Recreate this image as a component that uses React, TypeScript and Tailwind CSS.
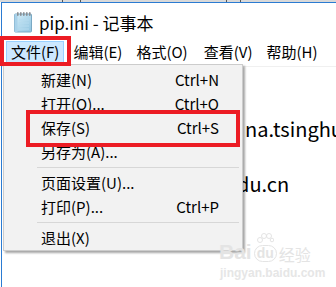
import React from "react";

const font = "font-['Noto_Sans_CJK_SC','Noto_Sans',sans-serif]";

function NotepadIcon() {
  return (
    <svg width="20" height="22" viewBox="0 0 20 22">
      <defs>
        <linearGradient id="np" x1="0" y1="0" x2="1" y2="1">
          <stop offset="0" stopColor="#d6eef9" />
          <stop offset="1" stopColor="#8fc4e0" />
        </linearGradient>
      </defs>
      <rect x="1.5" y="3" width="17" height="18" rx="1" fill="url(#np)" stroke="#7aa9c4" strokeWidth="1" />
      <rect x="1.5" y="3" width="3" height="18" fill="#a9d2ea" />
      <line x1="6" y1="9" x2="16" y2="9" stroke="#b5dbef" />
      <line x1="6" y1="12" x2="16" y2="12" stroke="#b5dbef" />
      <line x1="6" y1="15" x2="16" y2="15" stroke="#b5dbef" />
      <line x1="6" y1="18" x2="16" y2="18" stroke="#b5dbef" />
      {[4, 7, 10, 13, 16].map((x) => (
        <rect key={x} x={x} y="1" width="1.6" height="4" rx="0.8" fill="#8a8f94" />
      ))}
    </svg>
  );
}

function Item({ label, shortcut }: { label: string; shortcut?: string }) {
  return (
    <div className="h-[24px] flex items-center justify-between pl-[37px] pr-[23px] text-[15px] text-black">
      <span>{label}</span>
      {shortcut && <span>{shortcut}</span>}
    </div>
  );
}

function Sep() {
  return (
    <div className="h-[7px] flex items-center ml-[33px] mr-[3px]">
      <div className="h-px w-full bg-[#d7d7d7]" />
    </div>
  );
}

export default function App() {
  return (
    <div className={`w-[336px] h-[287px] bg-white relative overflow-hidden ${font}`}>
      {/* top strip */}
      <div className="h-[2px] bg-[#d9d9d9] flex">
        <div className="ml-[62px] w-px bg-[#555]" />
        <div className="ml-[17px] w-px bg-[#555]" />
        <div className="ml-[145px] w-px bg-[#555]" />
        <div className="ml-[13px] w-px bg-[#555]" />
      </div>
      <div className="ml-[1px] border-t border-l border-[#2b7bd2] h-[285px] flex flex-col">
        {/* title bar */}
        <div className="h-[35px] flex items-center pl-[11px] gap-[6px] pt-[3px]">
          <NotepadIcon />
          <span className="text-[17px] text-black leading-none">pip.ini - 记事本</span>
        </div>
        {/* menu bar */}
        <div className="h-[29px] flex items-center text-[15px] text-black border-b border-[#f0f0f0]">
          <div className="ml-[4px] h-[23px] px-[4px] flex items-center bg-[#cce8ff] border border-[#99d1ff]">文件(F)</div>
          <div className="ml-[9px]">编辑(E)</div>
          <div className="ml-[14px]">格式(O)</div>
          <div className="ml-[16px]">查看(V)</div>
          <div className="ml-[14px]">帮助(H)</div>
        </div>
        {/* editor */}
        <div className="flex-1 flex flex-col pt-[20px] text-[20px] leading-[27.5px] text-black whitespace-nowrap overflow-hidden">
          <div className="h-[27.5px]" />
          <div className="pl-[243px]">na.tsinghua.edu.cn/simple</div>
          <div className="h-[27.5px]" />
          <div className="pl-[235px]">du.cn</div>
        </div>
      </div>

      {/* dropdown menu */}
      <div className="absolute left-[3px] top-[64px] w-[240px] bg-[#f2f2f2] border border-[#cccccc] shadow-[2px_2px_2px_rgba(0,0,0,0.35)] pt-[3px]">
        <Item label="新建(N)" shortcut="Ctrl+N" />
        <Item label="打开(O)..." shortcut="Ctrl+O" />
        <Item label="保存(S)" shortcut="Ctrl+S" />
        <Item label="另存为(A)..." />
        <Sep />
        <Item label="页面设置(U)..." />
        <Item label="打印(P)..." shortcut="Ctrl+P" />
        <Sep />
        <Item label="退出(X)" />
      </div>

      {/* red highlight boxes */}
      <div className="absolute left-0 top-[36px] w-[71px] h-[30px] border-[4px] border-[#ec1c24]" />
      <div className="absolute left-[26px] top-[110px] w-[214px] h-[37px] border-[4px] border-[#ec1c24]" />

      {/* watermark */}
      <div className="absolute left-[219px] top-[233px] flex items-end gap-[2px] text-[#e4e4e4]">
        <span className="text-[21px] font-bold leading-none font-['Liberation_Sans',sans-serif]">Bai</span>
        <div className="flex flex-col items-center">
          <svg width="18" height="12" viewBox="0 0 18 12">
            <circle cx="4" cy="7" r="2.5" fill="none" stroke="#e4e4e4" />
            <circle cx="8" cy="3" r="2.5" fill="none" stroke="#e4e4e4" />
            <circle cx="13" cy="3" r="2.5" fill="none" stroke="#e4e4e4" />
            <circle cx="16" cy="7" r="1.8" fill="none" stroke="#e4e4e4" />
          </svg>
          <span className="rounded-full border border-[#e4e4e4] px-[2px] text-[14px] leading-[15px] font-bold font-['Liberation_Sans',sans-serif]">du</span>
        </div>
        <span className="text-[16px] leading-none">经验</span>
      </div>
      <div className="absolute left-[220px] top-[267px] text-[12px] leading-none text-[#e6e6e6] font-['Liberation_Sans',sans-serif] font-bold">
        jingyan.baidu.com
      </div>
    </div>
  );
}
